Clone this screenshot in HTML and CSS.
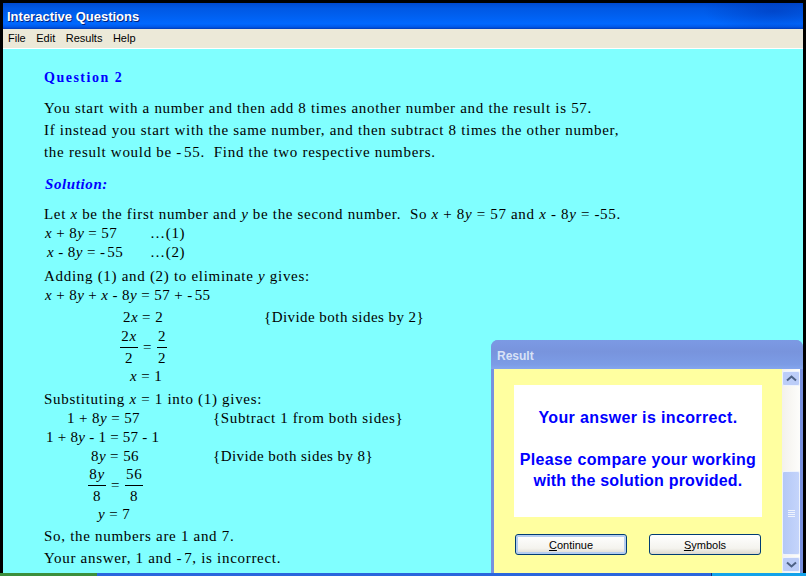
FILE: index.html
```html
<!DOCTYPE html>
<html lang="en">
<head>
<meta charset="utf-8">
<title>Interactive Questions</title>
<link rel="stylesheet" href="styles.css">
</head>
<body>
<div class="window">
  <header class="titlebar">Interactive Questions</header>
  <nav class="menubar"><span>File</span><span>Edit</span><span>Results</span><span>Help</span></nav>
  <main class="content">
    <h1 class="question">Question 2</h1>
    <p class="intro">You start with a number and then add 8 times another number and the result is 57.</p>
    <p class="intro">If instead you start with the same number, and then subtract 8 times the other number,</p>
    <p class="intro">the result would be <span class="neg">-</span>55.&nbsp; Find the two respective numbers.</p>
    <h2 class="solution">Solution:</h2>
    <p class="line let">Let <i>x</i> be the first number and <i>y</i> be the second number.&nbsp; So <i>x</i> + 8<i>y</i> = 57 and <i>x</i> - 8<i>y</i> = -55.</p>
    <div class="eq r19"><span class="math c151 i1"><i>x</i> + 8<i>y</i> = 57</span><span>&hellip;(1)</span></div>
    <div class="eq r19"><span class="math c151 i3"><i>x</i> - 8<i>y</i> = <span class="neg">-</span>55</span><span>&hellip;(2)</span></div>
    <p class="line adding">Adding (1) and (2) to eliminate <i>y</i> gives:</p>
    <div class="eq r22"><span class="math i1"><i>x</i> + 8<i>y</i> + <i>x</i> - 8<i>y</i> = 57 + <span class="neg">-</span>55</span></div>
    <div class="eq r19"><span class="math c265 i79">2<i>x</i> = 2</span><span class="tight">{Divide both sides by 2}</span></div>
    <div class="eq frac-row i76">
      <span class="frac w18"><span class="num">2<i>x</i></span><span class="den">2</span></span><span class="frac-eq">=</span><span class="frac w10"><span class="num">2</span><span class="den">2</span></span>
    </div>
    <div class="eq r21"><span class="math i86"><i>x</i> = 1</span></div>
    <p class="line subst">Substituting <i>x</i> = 1 into (1) gives:</p>
    <div class="eq r19"><span class="math c214 i23">1 + 8<i>y</i> = 57</span><span class="note">{Subtract 1 from both sides}</span></div>
    <div class="eq r19"><span class="math math-tight i2">1 + 8<i>y</i> - 1 = 57 - 1</span></div>
    <div class="eq r19"><span class="math c214 i47">8<i>y</i> = 56</span><span class="tight">{Divide both sides by 8}</span></div>
    <div class="eq frac-row frac-short i44">
      <span class="frac w18"><span class="num">8<i>y</i></span><span class="den">8</span></span><span class="frac-eq">=</span><span class="frac w18"><span class="num">56</span><span class="den">8</span></span>
    </div>
    <div class="eq r19"><span class="math i54"><i>y</i> = 7</span></div>
    <p class="line so">So, the numbers are 1 and 7.</p>
    <p class="line yours">Your answer, 1 and <span class="neg">-</span>7, is incorrect.</p>
  </main>
  <section class="dialog">
    <header class="dialog-title">Result</header>
    <div class="dialog-body">
      <div class="dialog-main">
        <div class="message">
          <p>Your answer is incorrect.</p>
          <p class="message-gap">Please compare your working<br><span class="msg-last">with the solution provided.</span></p>
        </div>
        <div class="buttons">
          <button class="btn btn-default" type="button"><u>C</u>ontinue</button>
          <button class="btn" type="button"><u>S</u>ymbols</button>
        </div>
      </div>
      <div class="scrollbar">
        <div class="sb-btn"><svg width="11" height="7" viewBox="0 0 11 7"><path d="M1 5.5 5.5 1.5 10 5.5" fill="none" stroke="#4d6185" stroke-width="2"/></svg></div>
        <div class="sb-track"></div>
        <div class="sb-thumb"><span></span><span></span><span></span><span></span></div>
        <div class="sb-btn"><svg width="11" height="7" viewBox="0 0 11 7"><path d="M1 1.5 5.5 5.5 10 1.5" fill="none" stroke="#4d6185" stroke-width="2"/></svg></div>
      </div>
    </div>
  </section>
</div>
<footer class="taskbar"><div class="start"></div><div class="task-main"></div><div class="tray"></div></footer>
</body>
</html>
```
FILE: styles.css
```css
* { box-sizing: border-box; }
html, body { margin: 0; height: 100%; overflow: hidden; }
body {
  width: 806px;
  height: 576px;
  background: #000;
  display: flex;
  flex-direction: column;
}
.window {
  position: relative;
  margin: 3px 3px 0;
  height: 570px;
  display: flex;
  flex-direction: column;
}
.titlebar {
  height: 26px;
  padding: 0 4px;
  background:
    radial-gradient(70px 20px at 770px 8px, rgba(0, 40, 160, 0.4), transparent),
    linear-gradient(180deg, #004ad0 0%, #0058e4 20%, #0060f0 50%, #0068ff 80%, #0058e8 92%, #003cb8 100%);
  color: #fff;
  font: bold 13px/27px "Liberation Sans", Arial, sans-serif;
  text-shadow: 1px 1px 0 #00237d;
}
.menubar {
  height: 19px;
  background: #ece9d8;
  display: flex;
  gap: 10.5px;
  padding: 0 5px;
  color: #000;
  font: 11px/19px "Liberation Sans", Arial, sans-serif;
}
.content {
  flex: 1;
  border-top: 1px solid #fff;
  background: #80ffff;
  padding: 21px 0 0 41px;
  color: #000;
  font: 15px/19px "Liberation Serif", "Times New Roman", serif;
  letter-spacing: 0.7px;
  white-space: nowrap;
  overflow: hidden;
}
.question {
  margin: 0 0 13px;
  color: #0000ff;
  font: bold 14px/16px "Liberation Serif", serif;
  letter-spacing: 1.5px;
}
.intro { margin: 0 0 3px; }
.solution {
  margin: 13px 0 11px 1px;
  color: #0000ff;
  font: italic bold 15px/19px "Liberation Serif", serif;
  letter-spacing: 0.6px;
}
.line { margin: 0; }
.let { height: 19px; letter-spacing: 0.67px; }
.adding { margin-top: 5px; height: 19px; }
.subst { margin-top: 2px; height: 19px; }
.so { margin-top: 3px; height: 22px; }
.yours { height: 19px; }
.math { letter-spacing: 0.4px; }
.math-tight { letter-spacing: 0.25px; }
.tight { letter-spacing: 0.45px; }
.note { letter-spacing: 0.63px; }
.neg { margin-right: 2px; }
.eq { display: flex; }
.r19 { height: 19px; }
.r21 { height: 21px; }
.r22 { height: 22px; }
.i1 { margin-left: 1px; }
.i2 { margin-left: 2px; }
.i3 { margin-left: 3px; }
.i23 { margin-left: 23px; }
.i44 { margin-left: 44px; }
.i47 { margin-left: 47px; }
.i54 { margin-left: 54px; }
.i76 { margin-left: 76px; }
.i79 { margin-left: 79px; }
.i86 { margin-left: 86px; }
.c151.i1 { width: 105px; }
.c151.i3 { width: 103px; }
.c214.i23 { width: 146px; }
.c214.i47 { width: 122px; }
.c265.i79 { width: 141px; }
.frac-row { height: 40px; align-items: center; gap: 5px; }
.frac-short { height: 39px; }
.frac { display: flex; flex-direction: column; align-items: center; line-height: 19px; }
.w18 { width: 18px; }
.w10 { width: 10px; }
.num { width: 100%; text-align: center; border-bottom: 1px solid #000; padding-bottom: 1px; }
.den { padding-top: 1px; }
.frac-eq { line-height: 19px; }
.dialog {
  position: absolute;
  left: 488px;
  top: 337px;
  width: 312px;
  height: 233px;
  display: flex;
  flex-direction: column;
  background: #7890df;
  border-radius: 7px 7px 0 0;
}
.dialog-title {
  height: 29px;
  padding: 0 0 0 6px;
  color: #d8e2f6;
  background: linear-gradient(180deg, #7c9ae4 0%, #7894dd 40%, #7c9ce6 85%, #85a6ee 100%);
  border-radius: 7px 7px 0 0;
  font: bold 12px/32px "Liberation Sans", Arial, sans-serif;
}
.dialog-body {
  flex: 1;
  margin: 0 3px;
  background: #ffffa0;
  display: flex;
  min-height: 0;
}
.dialog-main {
  flex: 1;
  padding: 16px 20px 0 20px;
}
.message {
  height: 132px;
  background: #fff;
  color: #0000ff;
  font: bold 16px/21px "Liberation Sans", Arial, sans-serif;
  letter-spacing: 0.36px;
  text-align: center;
  padding-top: 22px;
}
.message p { margin: 0; }
.message .message-gap { margin-top: 21px; }
.msg-last { letter-spacing: 0.2px; }
.buttons {
  display: flex;
  gap: 22px;
  margin: 17px 0 0 1px;
}
.btn {
  width: 112px;
  height: 21px;
  padding: 1px 0 0;
  border: 1px solid #003c74;
  border-radius: 3px;
  background: linear-gradient(180deg, #fff 0%, #f4f3ee 70%, #dcd8ce 100%);
  color: #000;
  font: 11px/18px "Liberation Sans", Arial, sans-serif;
}
.btn-default {
  box-shadow: inset 0 0 0 2px #b5cdf0;
}
.scrollbar {
  width: 18px;
  display: flex;
  flex-direction: column;
  background: linear-gradient(90deg, #f3f1ec, #fdfdfb);
}
.sb-btn {
  height: 15px;
  margin: 2px 0 1px;
  flex: none;
  border: 1px solid #eef3fd;
  border-radius: 2px;
  background: #bccdf8;
  display: flex;
  align-items: center;
  justify-content: center;
}
.sb-track { height: 84px; }
.sb-thumb {
  flex: 1;
  border: 1px solid #eef3fd;
  border-radius: 2px;
  background: linear-gradient(90deg, #b4c8f6, #c4d4fb);
  display: flex;
  flex-direction: column;
  justify-content: center;
  align-items: center;
  gap: 1px;
}
.sb-thumb span { width: 7px; height: 1px; background: #eef3fd; }
.taskbar {
  height: 3px;
  display: flex;
}
.start { width: 97px; background: #3c8f3c; }
.task-main { flex: 1; background: #2a66dd; }
.tray { width: 95px; background: #12a2ea; border-left: 1px solid #10307a; }
```
